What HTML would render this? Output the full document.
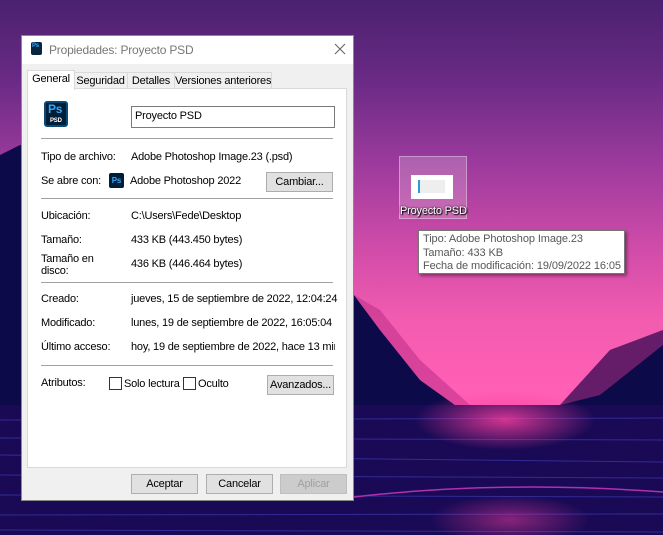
<!DOCTYPE html>
<html><head><meta charset="utf-8"><style>
*{margin:0;padding:0;box-sizing:border-box}
body{width:663px;height:535px;overflow:hidden;position:relative;font-family:"Liberation Sans",sans-serif;font-size:11px;letter-spacing:-0.2px;color:#000;
background:linear-gradient(180deg,#4a2170 0%,#6a2a85 15%,#9a3a9c 30%,#cc4aa8 45%,#f35cb0 60%,#ff5fb5 72%,#ff5fb5 100%)}
.abs{position:absolute}
.win{left:21px;top:35px;width:333px;height:466px;background:#f0f0f0;border:1px solid #8a8a8a}
.title{left:0;top:0;width:331px;height:28px;background:#fff}
.t{position:absolute;white-space:nowrap}
.btn{position:absolute;background:#e1e1e1;border:1px solid #adadad;text-align:center;line-height:18px;font-size:11px;white-space:nowrap}
.sep{position:absolute;left:13px;width:292px;height:1px;background:#a0a0a0}
.cb{position:absolute;width:13px;height:13px;border:1px solid #333;background:#fff}
.tab{position:absolute;top:36px;height:17px;border:1px solid #d9d9d9;border-left:none;background:#f0f0f0;text-align:center;line-height:16px;white-space:nowrap;overflow:hidden}
</style></head><body>
<svg class="abs" style="left:0;top:0" width="663" height="535">
<defs>
<radialGradient id="g" cx="0.5" cy="0.5" r="0.5"><stop offset="0" stop-color="#ff3fa0" stop-opacity="0.8"/><stop offset="1" stop-color="#ff3fa0" stop-opacity="0"/></radialGradient>
</defs>
<path d="M0 155 L20 145 L40 150 L300 280 L354 295 L380 330 L420 380 L455 405 L560 405 L610 350 L663 330 L663 535 L0 535Z" fill="#0c0a48"/>
<path d="M354 295 L380 330 L420 380 L455 405 L470 405 L420 360 L380 310Z" fill="#c0308a" opacity="0.6"/>
<path d="M663 330 L610 350 L560 405 L600 395 L663 345Z" fill="#c0308a" opacity="0.5"/>
<rect x="0" y="405" width="663" height="130" fill="#1a0a55"/>
<g stroke="#3a3ab0" stroke-width="1" opacity="0.7">
<line x1="0" y1="420" x2="663" y2="418"/><line x1="0" y1="438" x2="663" y2="440"/><line x1="0" y1="455" x2="663" y2="462"/><line x1="0" y1="475" x2="663" y2="478"/><line x1="0" y1="495" x2="663" y2="497"/><line x1="0" y1="515" x2="663" y2="514"/><line x1="0" y1="530" x2="663" y2="532"/>
</g>
<path d="M354 497 Q500 480 663 492" stroke="#b030b0" stroke-width="1.5" fill="none"/>
<ellipse cx="505" cy="420" rx="90" ry="30" fill="url(#g)"/>
<ellipse cx="510" cy="520" rx="80" ry="25" fill="url(#g)" opacity="0.6"/>
</svg>

<div class="abs" style="left:399px;top:156px;width:68px;height:63px;background:rgba(255,255,255,0.2);border:1px solid rgba(255,255,255,0.35)"></div>
<div class="abs" style="left:411px;top:175px;width:42px;height:24px;background:#fff"><div class="abs" style="left:7px;top:5px;width:2px;height:13px;background:#2a9ad8"></div><div class="abs" style="left:9px;top:5px;width:25px;height:13px;background:#eee"></div></div>
<div class="t" style="left:400px;top:205px;color:#fff;font-size:11px;text-shadow:0 0 2px #000,1px 1px 1px #000">Proyecto PSD</div>

<div class="abs" style="left:418px;top:230px;width:207px;height:44px;background:#fff;border:1px solid #767676;box-shadow:2px 2px 3px rgba(0,0,0,.4);color:#575757;font-size:11px;line-height:13.5px;padding:2px 4px;white-space:nowrap;letter-spacing:-0.1px">Tipo: Adobe Photoshop Image.23<br>Tamaño: 433 KB<br>Fecha de modificación: 19/09/2022 16:05</div>

<div class="abs win">
<div class="abs title"></div>
<div class="abs" style="left:9px;top:6px;width:11px;height:13px;background:#0a2540;border-radius:2px;color:#31a8ff;font-size:6px;font-weight:bold;padding:1px">Ps</div>
<div class="t" style="left:27px;top:7px;font-size:12px;color:#777">Propiedades: Proyecto PSD</div>
<svg class="abs" style="left:312px;top:7px" width="12" height="12"><path d="M1 1L11 11M11 1L1 11" stroke="#666" stroke-width="1.1"/></svg>
<div class="tab" style="left:52px;width:54px">Seguridad</div>
<div class="tab" style="left:106px;width:47px">Detalles</div>
<div class="tab" style="left:153px;width:97px">Versiones anteriores</div>
<div class="abs" style="left:5px;top:34px;width:48px;height:20px;background:#fff;border:1px solid #d9d9d9;border-bottom:none;z-index:2;text-align:center;line-height:17px">General</div>
<div class="abs" style="left:5px;top:52px;width:320px;height:380px;background:#fff;border:1px solid #d9d9d9">
<div class="abs" style="left:16px;top:12px;width:24px;height:26px;background:#001e36;border:2px solid #0a4a7a;border-radius:3px"></div>
<div class="t" style="left:20px;top:13px;color:#31a8ff;font-weight:bold;font-size:12px">Ps</div>
<div class="t" style="left:22px;top:29px;color:#fff;font-size:6px;font-weight:bold">PSD</div>
<div class="abs" style="left:103px;top:17px;width:204px;height:22px;border:1px solid #7a7a7a"></div>
<div class="t" style="left:107px;top:21px">Proyecto PSD</div>
<div class="sep" style="top:49px"></div>
<div class="t" style="left:13px;top:62px">Tipo de archivo:</div>
<div class="t" style="left:103px;top:62px">Adobe Photoshop Image.23 (.psd)</div>
<div class="t" style="left:13px;top:86px">Se abre con:</div>
<div class="abs" style="left:81px;top:84px;width:15px;height:15px;background:#001e36;border-radius:2px;color:#31a8ff;font-size:8px;font-weight:bold;text-align:center;line-height:15px">Ps</div>
<div class="t" style="left:102px;top:86px">Adobe Photoshop 2022</div>
<div class="btn" style="left:238px;top:83px;width:67px;height:20px">Cambiar...</div>
<div class="sep" style="top:109px"></div>
<div class="t" style="left:13px;top:121px">Ubicación:</div>
<div class="t" style="left:103px;top:121px">C:\Users\Fede\Desktop</div>
<div class="t" style="left:13px;top:145px">Tamaño:</div>
<div class="t" style="left:103px;top:145px">433 KB (443.450 bytes)</div>
<div class="t" style="left:13px;top:164px;line-height:12px">Tamaño en<br>disco:</div>
<div class="t" style="left:103px;top:169px">436 KB (446.464 bytes)</div>
<div class="sep" style="top:193px"></div>
<div class="t" style="left:13px;top:204px">Creado:</div>
<div class="t" style="left:103px;top:204px">jueves, 15 de septiembre de 2022, 12:04:24</div>
<div class="t" style="left:13px;top:228px">Modificado:</div>
<div class="t" style="left:103px;top:228px">lunes, 19 de septiembre de 2022, 16:05:04</div>
<div class="t" style="left:13px;top:252px">Último acceso:</div>
<div class="abs" style="left:103px;top:252px;width:204px;overflow:hidden;white-space:nowrap">hoy, 19 de septiembre de 2022, hace 13 minutos</div>
<div class="sep" style="top:276px"></div>
<div class="t" style="left:13px;top:288px">Atributos:</div>
<div class="cb" style="left:81px;top:288px"></div>
<div class="t" style="left:96px;top:289px">Solo lectura</div>
<div class="cb" style="left:155px;top:288px"></div>
<div class="t" style="left:170px;top:289px">Oculto</div>
<div class="btn" style="left:239px;top:286px;width:67px;height:20px">Avanzados...</div>
</div>
<div class="btn" style="left:109px;top:438px;width:67px;height:20px">Aceptar</div>
<div class="btn" style="left:184px;top:438px;width:67px;height:20px">Cancelar</div>
<div class="btn" style="left:258px;top:438px;width:67px;height:20px;color:#a0a0a0;border-color:#bfbfbf;background:#ccc">Aplicar</div>
</div>
</body></html>
